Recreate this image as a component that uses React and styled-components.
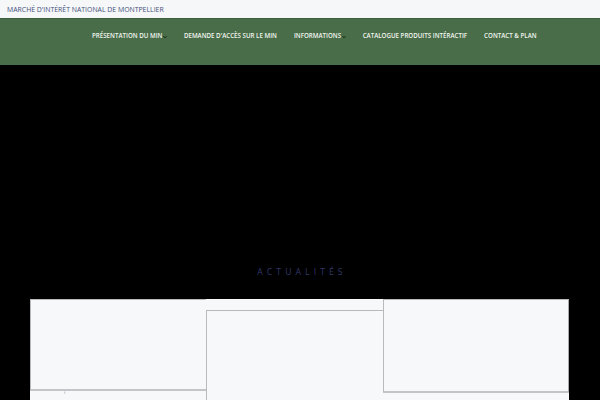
import React from "react"
import styled, { createGlobalStyle } from "styled-components"

const GlobalStyle = createGlobalStyle`
  html, body {
    margin: 0;
    padding: 0;
    background: #000;
    font-family: "Open Sans", "Liberation Sans", sans-serif;
  }
  * {
    box-sizing: border-box;
  }
`

const Page = styled.div`
  width: 600px;
  height: 400px;
  overflow: hidden;
  background: #000;
`

const TopBar = styled.div`
  height: 18px;
  background: #f6f7f9;
  display: flex;
  align-items: center;
  padding-left: 7px;
  font-size: 6.9px;
  color: #3f5079;
  text-transform: uppercase;
`

const Nav = styled.nav`
  height: 47px;
  background: #486d48;
  border-top: 1px solid #3f5f40;
  display: flex;
  padding-left: 83.5px;
  padding-top: 12px;
`

const NavItem = styled.a`
  display: flex;
  align-items: flex-start;
  padding: 0 8.5px;
  font-size: 6.2px;
  font-weight: 600;
  color: #f3f5f1;
  text-transform: uppercase;
  text-decoration: none;
  white-space: nowrap;
  line-height: 9px;
`

const Caret = styled.svg`
  width: 4px;
  height: 4px;
  margin-left: 0.5px;
  margin-top: 3.5px;
`

const Hero = styled.div`
  height: 198px;
`

const SectionTitle = styled.h2`
  margin: 0;
  height: 36px;
  text-align: center;
  font-size: 8.6px;
  font-weight: 400;
  letter-spacing: 4.1px;
  color: #33366a;
  text-transform: uppercase;
  padding-left: 4px;
  line-height: 18px;
`

const NewsArea = styled.section`
  margin-left: 30px;
  width: 539px;
  height: 120px;
  background: #f7f8fa;
  display: grid;
  grid-template-columns: 176px 177px 186px;
  align-items: start;
  position: relative;
`

const Card = styled.article`
  margin-top: ${p => p.$offset || 0}px;
  height: ${p => p.$h}px;
  background: #f7f8fa;
  border-left: 1px solid #b9babd;
  border-bottom: 2px solid #c4c5c8;
  border-top: 1px solid #b8b9bc;
  border-right: ${p => (p.$right ? "1px solid #a9aaad" : "none")};
`

const Glyph = styled.span`
  position: absolute;
  left: 34px;
  top: 92px;
  font-size: 6px;
  line-height: 7px;
  color: #9a9ca3;
`

const items = [
  { label: "Présentation du MIN", caret: true },
  { label: "Demande d'accès sur le MIN" },
  { label: "Informations", caret: true },
  { label: "Catalogue produits intéractif" },
  { label: "Contact & Plan" },
]

export default function App() {
  return (
    <Page>
      <GlobalStyle />
      <TopBar>Marché d'intérêt national de Montpellier</TopBar>
      <Nav>
        {items.map(item => (
          <NavItem key={item.label} href="#">
            {item.label}
            {item.caret && (
              <Caret viewBox="0 0 4 4">
                <path d="M0.5 1.2 L2 2.8 L3.5 1.2" fill="none" stroke="#10260f" strokeWidth="1" />
              </Caret>
            )}
          </NavItem>
        ))}
      </Nav>
      <Hero />
      <SectionTitle>Actualités</SectionTitle>
      <NewsArea>
        <Card $h={92} />
        <Card $offset={11} $h={120} />
        <Card $h={94} $right />
        <Glyph>ᵗ</Glyph>
      </NewsArea>
    </Page>
  )
}
